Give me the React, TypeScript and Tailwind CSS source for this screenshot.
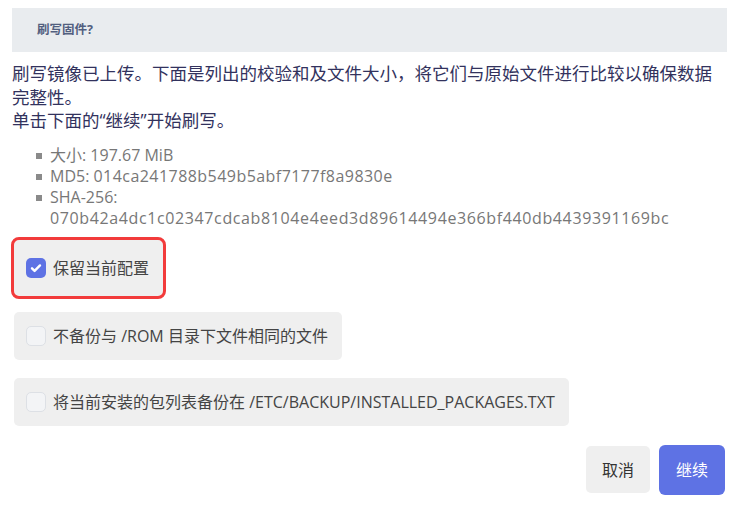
export default function App() {
  return (
    <div className="min-h-[506px] bg-white pl-3 pr-2 pt-2 font-['Open_Sans','Noto_Sans_CJK_SC',sans-serif]">
      <div className="flex h-[44px] items-center bg-[#e9ecef] pl-[25px] text-[12.5px] font-bold text-[#525f7f]">
        刷写固件?
      </div>
      <p className="mt-[10px] text-[17.5px] leading-[23.5px] text-[#32325d]">
        刷写镜像已上传。下面是列出的校验和及文件大小，将它们与原始文件进行比较以确保数据完整性。
        <br />
        单击下面的“继续”开始刷写。
      </p>
      <ul className="mt-[12px] text-[16px] leading-[21.3px] text-[#777]">
        <Item>大小: 197.67 MiB</Item>
        <Item>
          MD5: <span className="tracking-[0.45px]">014ca241788b549b5abf7177f8a9830e</span>
        </Item>
        <Item>
          SHA-256:
          <br />
          <span className="tracking-[0.62px]">070b42a4dc1c02347cdcab8104e4eed3d89614494e366bf440db4439391169bc</span>
        </Item>
      </ul>
      <div className="mt-[10px] flex flex-col items-start">
        <div className="ml-[2px] rounded-[5px] outline-[3px] outline-solid outline-[#f23b3b]">
          <Option checked label="保留当前配置" tall />
        </div>
        <div className="mt-[16px] ml-[2px]">
          <Option label="不备份与 /ROM 目录下文件相同的文件" />
        </div>
        <div className="mt-[18px] ml-[2px]">
          <Option label="将当前安装的包列表备份在 /ETC/BACKUP/INSTALLED_PACKAGES.TXT" />
        </div>
      </div>
      <div className="mt-[19px] flex items-center justify-end gap-[9px] pr-[2px]">
        <button className="h-[47px] w-[64px] rounded-[5px] bg-[#efefef] text-[16px] text-[#333]">取消</button>
        <button className="h-[50px] w-[66px] rounded-[6px] bg-[#5e72e4] text-[16px] text-white">继续</button>
      </div>
    </div>
  );
}

function Item({ children }: { children: React.ReactNode }) {
  return (
    <li className="relative pl-[38px]">
      <span className="absolute left-[24px] top-[8px] h-[6px] w-[6px] bg-[#8a8a8a]" />
      {children}
    </li>
  );
}

function Option({ label, checked, tall }: { label: string; checked?: boolean; tall?: boolean }) {
  return (
    <label className={`flex items-center gap-[7px] rounded-[5px] bg-[#efefef] pl-[12px] pr-[14px] text-[16px] text-[#444] ${tall ? 'h-[56px]' : 'h-[48px]'}`}>
      {checked ? (
        <span className="flex h-[20px] w-[20px] items-center justify-center rounded-[5px] bg-[#5e72e4]">
          <svg width="12" height="12" viewBox="0 0 12 12" fill="none">
            <path d="M2 6.3l2.6 2.6L10 3.4" stroke="white" strokeWidth="2.4" strokeLinecap="round" strokeLinejoin="round" />
          </svg>
        </span>
      ) : (
        <span className="h-[20px] w-[20px] rounded-[5px] border border-[#dde0e5] bg-[#f3f4f6]" />
      )}
      <span>{label}</span>
    </label>
  );
}
